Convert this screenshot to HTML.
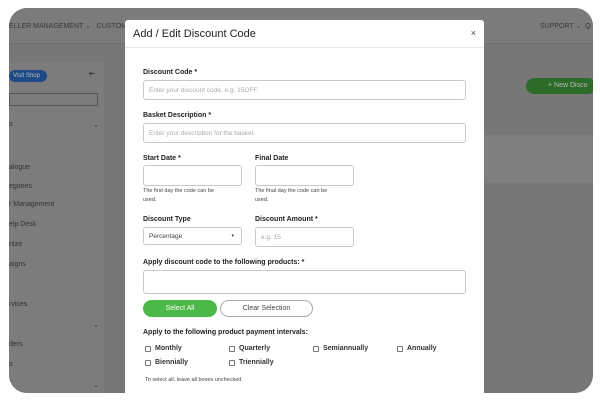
<!DOCTYPE html>
<html><head><style>
*{margin:0;padding:0;box-sizing:border-box}
body{width:600px;height:400px;background:#fff;position:relative;overflow:hidden;font-family:"Liberation Sans",sans-serif}
.frame{position:absolute;left:9px;top:8px;width:584px;height:385px;border-radius:18px;background:#777;overflow:hidden}
.nav{position:absolute;left:0;top:0;right:0;height:36px;background:#7b7b7b;border-bottom:1px solid #6e6e6e;font-size:7px;color:#3a3a3a}
.side{position:absolute;left:0;top:55px;width:95px;height:340px;background:#7c7c7c;font-size:7px;color:#333}
.t{position:absolute;white-space:nowrap}
.modal{position:absolute;left:125px;top:20px;width:359px;height:380px;background:#fff;border-radius:3px 3px 0 0}
.mh{height:28px;border-bottom:1px solid #e8e8e8;position:relative}
.mh h1{position:absolute;left:8px;top:8px;font-size:11px;font-weight:normal;color:#222}
.lbl{position:absolute;font-size:7px;font-weight:bold;color:#222}
.inp{position:absolute;border:1px solid #c8c8c8;border-radius:3px;font-size:6.5px;color:#aaa;padding-left:5px;display:flex;align-items:center}
.help{position:absolute;font-size:5.5px;color:#444;line-height:9px}
.cb{position:absolute;font-size:7px;font-weight:bold;color:#333;display:flex;align-items:center}
.cb i{display:inline-block;width:6px;height:6px;border:1px solid #777;border-radius:1px;margin-right:4px}
</style></head><body>
<div class="frame">
 <div class="nav">
  <span class="t" style="left:0;top:14px">ELLER MANAGEMENT ⌄ &nbsp; CUSTOMER</span>
  <span class="t" style="left:531px;top:14px">SUPPORT ⌄ &nbsp;Q</span>
 </div>
 <div class="side">
  <div class="t" style="left:0;top:30px;width:89px;height:13px;border:1px solid #555"></div>
  <span class="t" style="left:0;top:58px">s</span><span class="t" style="left:84px;top:58px">⌄</span>
  <span class="t" style="left:0;top:101px">alogue</span>
  <span class="t" style="left:0;top:120px">egories</span>
  <span class="t" style="left:0;top:138px">r Management</span>
  <span class="t" style="left:0;top:158px">elp Desk</span>
  <span class="t" style="left:0;top:178px">ntze</span>
  <span class="t" style="left:0;top:198px">aigns</span>
  <span class="t" style="left:0;top:238px">rvices</span>
  <span class="t" style="left:84px;top:258px">⌄</span>
  <span class="t" style="left:0;top:278px">ders</span>
  <span class="t" style="left:0;top:298px">s</span>
  <span class="t" style="left:84px;top:318px">⌄</span>
 </div>
 <div class="t" style="left:0;top:62px;width:38px;height:12px;background:#1e4a86;border-radius:6px;color:#bbb;font-size:6px;padding:3px 0 0 4px">Visit Shop</div>
 <div class="t" style="left:80px;top:61px;font-size:8px;color:#333">⇤</div>
 <div class="t" style="left:517px;top:70px;width:70px;height:16px;background:#2d6b28;border-radius:8px;color:#bbb;font-size:7px;padding:4px 0 0 22px">+ New Disco</div>
 <div class="t" style="left:475px;top:127px;width:110px;height:48px;background:#7f7f7f"></div>
</div>
<div class="modal">
 <div class="mh"><h1>Add / Edit Discount Code</h1><span class="t" style="right:8px;top:8px;font-size:9px;color:#444">×</span></div>
</div>
<div class="lbl" style="left:143px;top:69px">Discount Code *</div>
<div class="inp" style="left:143px;top:80px;width:323px;height:20px">Enter your discount code, e.g. 15OFF</div>
<div class="lbl" style="left:143px;top:112px">Basket Description *</div>
<div class="inp" style="left:143px;top:123px;width:323px;height:20px">Enter your description for the basket.</div>
<div class="lbl" style="left:143px;top:155px">Start Date *</div>
<div class="inp" style="left:143px;top:165px;width:99px;height:21px"></div>
<div class="help" style="left:143px;top:187px">The first day the code can be<br>used.</div>
<div class="lbl" style="left:255px;top:155px">Final Date</div>
<div class="inp" style="left:255px;top:165px;width:99px;height:21px"></div>
<div class="help" style="left:255px;top:187px">The final day the code can be<br>used.</div>
<div class="lbl" style="left:143px;top:216px">Discount Type</div>
<div class="inp" style="left:143px;top:227px;width:99px;height:18px;color:#444">Percentage<span style="position:absolute;right:7px;font-size:5px">▾</span></div>
<div class="lbl" style="left:255px;top:216px">Discount Amount *</div>
<div class="inp" style="left:255px;top:227px;width:99px;height:20px">e.g. 15</div>
<div class="lbl" style="left:143px;top:259px">Apply discount code to the following products: *</div>
<div class="inp" style="left:143px;top:270px;width:323px;height:24px"></div>
<div class="t" style="left:143px;top:300px;width:74px;height:17px;background:#4cb847;border-radius:9px;color:#fff;font-size:7px;text-align:center;line-height:17px">Select All</div>
<div class="t" style="left:220px;top:300px;width:93px;height:17px;border:1px solid #aaa;border-radius:9px;color:#444;font-size:7px;text-align:center;line-height:15px">Clear Selection</div>
<div class="lbl" style="left:143px;top:329px">Apply to the following product payment intervals:</div>
<div class="cb" style="left:145px;top:345px"><i></i>Monthly</div>
<div class="cb" style="left:229px;top:345px"><i></i>Quarterly</div>
<div class="cb" style="left:313px;top:345px"><i></i>Semiannually</div>
<div class="cb" style="left:397px;top:345px"><i></i>Annually</div>
<div class="cb" style="left:145px;top:359px"><i></i>Biennially</div>
<div class="cb" style="left:229px;top:359px"><i></i>Triennially</div>
<div class="help" style="left:145px;top:376px">To select all, leave all boxes unchecked.</div>
</body></html>
